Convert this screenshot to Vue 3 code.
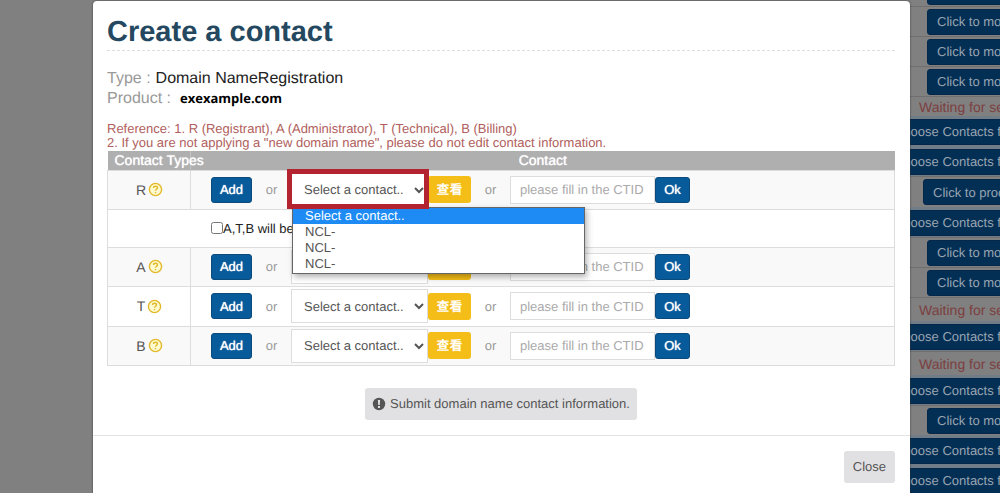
<script setup>
import { ref } from 'vue'

const rows = [
  { id: 'R', sync: true, open: true },
  { id: 'A' },
  { id: 'T' },
  { id: 'B' },
]
const options = ['Select a contact..', 'NCL-', 'NCL-', 'NCL-']
const sync = ref(false)

const orders = [
  { kind: 'modify', text: 'Click to modify' },
  { kind: 'modify', text: 'Click to modify' },
  { kind: 'modify', text: 'Click to modify' },
  { kind: 'modify', text: 'Click to modify' },
  { kind: 'waiting', text: 'Waiting for service', compact: true },
  { kind: 'choose', text: 'Choose Contacts for' },
  { kind: 'choose', text: 'Choose Contacts for' },
  { kind: 'process', text: 'Click to process' },
  { kind: 'choose', text: 'Choose Contacts for' },
  { kind: 'modify', text: 'Click to modify' },
  { kind: 'modify', text: 'Click to modify' },
  { kind: 'waiting', text: 'Waiting for service' },
  { kind: 'choose', text: 'Choose Contacts for' },
  { kind: 'waiting', text: 'Waiting for service' },
  { kind: 'choose', text: 'Choose Contacts for' },
  { kind: 'modify', text: 'Click to modify' },
  { kind: 'choose', text: 'Choose Contacts for' },
  { kind: 'choose', text: 'Choose Contacts for' },
]
</script>

<template>
  <div class="page">
    <div class="margin"></div>

    <main class="modal" role="dialog" aria-labelledby="modal-title">
      <div class="body">
        <h1 id="modal-title">Create a contact</h1>

        <dl class="summary">
          <div><dt>Type :</dt><dd>Domain NameRegistration</dd></div>
          <div><dt>Product :</dt><dd class="domain">exexample.com</dd></div>
        </dl>

        <p class="reference">
          Reference: 1. R (Registrant), A (Administrator), T (Technical), B (Billing)<br />
          2. If you are not applying a "new domain name", please do not edit contact information.
        </p>

        <table>
          <thead>
            <tr><th class="type">Contact Types</th><th>Contact</th></tr>
          </thead>
          <tbody>
            <template v-for="row in rows" :key="row.id">
              <tr :class="row.id === 'T' ? 'clear' : 'shaded'">
                <td class="type">
                  <span class="kind">{{ row.id }}
                    <svg class="help" viewBox="0 0 16 16" aria-hidden="true">
                      <circle cx="8" cy="8" r="6.5" />
                      <path d="M5.9 6.4c0-1.2.9-1.9 2.1-1.9s2.1.7 2.1 1.8c0 1.4-2.1 1.4-2.1 2.9M8 10.6v1.4" />
                    </svg>
                  </span>
                </td>
                <td class="fields">
                  <div class="line">
                    <button class="primary add" type="button">Add</button>
                    <span class="or">or</span>
                    <div class="picker">
                      <select :aria-label="`Contact for ${row.id}`">
                        <option v-for="(o, i) in options" :key="i">{{ o }}</option>
                      </select>
                      <template v-if="row.open">
                        <div class="marker"></div>
                        <ul class="menu">
                          <li v-for="(o, i) in options" :key="i" :class="{ active: i === 0 }">{{ o }}</li>
                        </ul>
                      </template>
                    </div>
                    <button class="view" type="button">查看</button>
                    <span class="or">or</span>
                    <input class="ctid" type="text" placeholder="please fill in the CTID" :aria-label="`CTID for ${row.id}`" />
                    <button class="primary ok" type="button">Ok</button>
                  </div>
                </td>
              </tr>
              <tr v-if="row.sync" class="sync">
                <td colspan="2">
                  <label><input v-model="sync" type="checkbox" />A,T,B will be</label>
                </td>
              </tr>
            </template>
          </tbody>
        </table>

        <button class="plain submit" type="button">
          <svg viewBox="0 0 14 14" aria-hidden="true">
            <circle cx="7" cy="7" r="6.2" fill="#555" />
            <path d="M5.9 2.9h2.2l-.3 5H6.2zM6 8.9h2v2H6z" fill="#e1e1e3" />
          </svg>
          Submit domain name contact information.
        </button>
      </div>

      <footer>
        <button class="plain" type="button">Close</button>
      </footer>
    </main>

    <aside class="orders">
      <div v-for="(o, i) in orders" :key="i" class="order" :class="[o.kind, { compact: o.compact }]">
        <span v-if="o.kind === 'waiting'">{{ o.text }}</span>
        <button v-else type="button">{{ o.text }}</button>
      </div>
    </aside>
  </div>
</template>

<style>
body {
  margin: 0;
  overflow: hidden;
  background: #808080;
}
</style>

<style scoped>
.page {
  display: flex;
  height: 100vh;
  overflow: hidden;
  font-family: "Liberation Sans", Arial, "Noto Sans CJK TC", sans-serif;
  font-size: 13px;
  color: #555;
  text-rendering: geometricPrecision;
}
* { box-sizing: border-box; }
button, input, select { font: inherit; text-rendering: inherit; }
button { cursor: pointer; }

.margin { flex: 0 0 93px; }
.modal {
  flex: 1;
  min-width: 0;
  margin-top: 1px;
  background: #fff;
  border-radius: 4px 4px 0 0;
  box-shadow: 0 0 2px #333;
  position: relative;
  z-index: 1;
}
.body { padding: 13px 15px 15px 14px; }
h1 {
  margin: 0 0 18px;
  border-bottom: 1px dashed #ddd;
  font-size: 29px;
  line-height: 36px;
  color: #24485f;
}
.summary { margin: 0; font-size: 16px; line-height: 19px; }
.summary div { display: flex; align-items: baseline; gap: 5px; }
.summary dt { color: #999; }
.summary dd { margin: 0; color: #222; }
.summary .domain {
  padding-left: 4px;
  font: bold 13px/20px "Open Sans", sans-serif;
  color: #000;
}
.reference { margin: 14px 0 1px; line-height: 14px; color: #b0605c; }

table {
  width: 100%;
  border-collapse: collapse;
  table-layout: fixed;
}
th {
  height: 19px;
  padding: 0;
  background: #afafaf;
  color: #fff;
  font-size: 14px;
  font-weight: normal;
  line-height: 18px;
  white-space: nowrap;
  text-shadow: 0 0 1px #fff;
}
.type { width: 83px; }
th.type { padding-left: 7px; text-align: left; }
th.type { border-right: 1px solid #c4c4c4; }
td { height: 39px; padding: 0; border: 1px solid #ddd; }
.shaded td { background: #f9f9f9; }
.clear td { height: 40px; }
.kind {
  display: flex;
  align-items: center;
  justify-content: center;
  gap: 2px;
  padding-left: 1px;
  font-size: 14px;
}
.help {
  width: 15px;
  height: 15px;
  fill: #fffbd0;
  stroke: #e3b92c;
  stroke-width: 1.5;
}
.line { display: flex; align-items: center; padding-left: 20px; }
.or { width: 39px; text-align: center; color: #999; }
.primary {
  height: 26px;
  padding: 0;
  border: 1px solid #0b4a7b;
  border-radius: 3px;
  background: #075b9a;
  color: #fff;
  text-shadow: 0 0 1px #fff;
}
.add { width: 41px; }
.ok { width: 35px; }
.view {
  width: 43px;
  height: 27px;
  padding: 0 0 2px;
  border: 0;
  border-radius: 3px;
  background: #f5bd17;
  color: #fff;
  font-weight: bold;
}
.picker { position: relative; }
select {
  display: block;
  width: 137px;
  height: 34px;
  padding: 0 0 0 8px;
  border: 1px solid #ddd;
  border-radius: 0;
  background: #fff;
  color: #555;
}
.marker {
  position: absolute;
  inset: -4px -1px -2px -4px;
  border: 5px solid #b32430;
  z-index: 3;
}
.menu {
  position: absolute;
  top: 34px;
  left: 1px;
  z-index: 2;
  width: 293px;
  margin: 0;
  padding: 0 0 1px;
  list-style: none;
  background: #fff;
  border: 1px solid #666;
  box-shadow: 2px 3px 6px rgba(0, 0, 0, 0.3);
}
.menu li { height: 16px; padding-left: 12px; line-height: 16px; }
.menu .active { background: #1e8bf5; color: #fff; }
.ctid {
  width: 145px;
  height: 28px;
  padding: 0 9px;
  border: 1px solid #ddd;
  color: #555;
}
.ctid::placeholder { color: #aaa; opacity: 1; }
.sync td { height: 38px; padding-left: 103px; color: #222; }
.sync label { display: flex; align-items: center; }
.sync input { width: 12px; height: 12px; margin: 0; }

.plain {
  height: 32px;
  padding: 0 9px;
  border: 0;
  border-radius: 3px;
  background: #e1e1e3;
  color: #555;
}
.submit {
  display: flex;
  align-items: center;
  gap: 4px;
  margin: 22px auto 0;
  padding: 0 7px;
}
.submit svg { width: 14px; height: 14px; }
footer {
  display: flex;
  justify-content: flex-end;
  padding: 15px;
  border-top: 1px solid #e3e3e3;
}

.orders {
  flex: 0 0 90px;
  min-width: 0;
  margin-top: -24px;
  overflow: hidden;
}
.order {
  display: flex;
  align-items: center;
  height: 30px;
  border-top: 1px solid #6f6f6f;
  white-space: nowrap;
}
.order button {
  flex: none;
  height: 26px;
  padding: 0 9px;
  border: 1px solid #05284a;
  border-radius: 3px;
  background: #032f55;
  color: #9aa5b1;
}
.modify { padding-left: 17px; }
.process { height: 31px; padding-left: 13px; }
.waiting { height: 24px; padding-left: 9px; color: #7c3f40; font-size: 14px; }
.compact { height: 20px; }
.choose { background: #707d89; border-color: #707d89; }
.choose button { margin-left: -26px; }
</style>
